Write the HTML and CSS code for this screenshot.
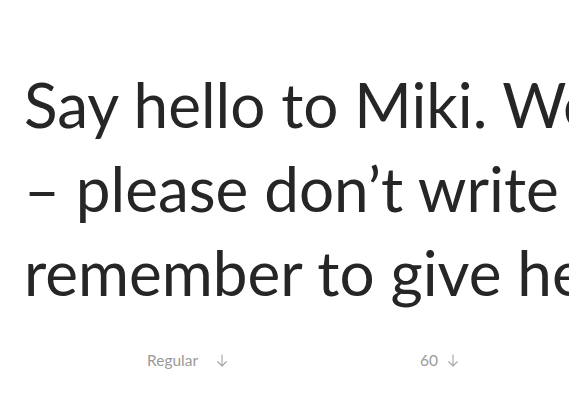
FILE: index.html
```html
<!DOCTYPE html>
<html>
<head>
<meta charset="utf-8">
<link rel="stylesheet" href="styles.css">
</head>
<body>
<div class="page">
  <div class="specimen">
    <div class="line">Say hello to Miki. We’re so glad she’s here</div>
    <div class="line">– please don’t write her name in lowercase, and</div>
    <div class="line">remember to give her a warm welcome.</div>
  </div>
  <div class="controls">
    <div class="control control-weight"><span>Regular</span><svg class="arrow" width="12" height="13" viewBox="0 0 12 13"><path d="M6 0.5V12M1.5 7.5L6 12L10.5 7.5" fill="none" stroke="#a3a3a3" stroke-width="1.1"/></svg></div>
    <div class="control control-size"><span>60</span><svg class="arrow" width="12" height="13" viewBox="0 0 12 13"><path d="M6 0.5V12M1.5 7.5L6 12L10.5 7.5" fill="none" stroke="#a3a3a3" stroke-width="1.1"/></svg></div>
  </div>
</div>
</body>
</html>
```
FILE: styles.css
```css
html, body {
  margin: 0;
  padding: 0;
  background: #fff;
  overflow: hidden;
}
.page {
  width: 569px;
  height: 406px;
  overflow: hidden;
  font-family: Lato, "Noto Sans", sans-serif;
}
.specimen {
  padding: 62px 0 0 24px;
  color: #262626;
  font-size: 62px;
  font-weight: 400;
  line-height: 84px;
}
.line {
  white-space: nowrap;
}
.controls {
  display: flex;
  padding-top: 37px;
  color: #9a9a9a;
  font-size: 15.5px;
}
.control {
  display: flex;
  align-items: center;
  gap: 18px;
}
.control-weight {
  margin-left: 147px;
}
.control-size {
  margin-left: 192px;
  gap: 9px;
}
.arrow {
  display: block;
  margin-top: 1px;
}
```
